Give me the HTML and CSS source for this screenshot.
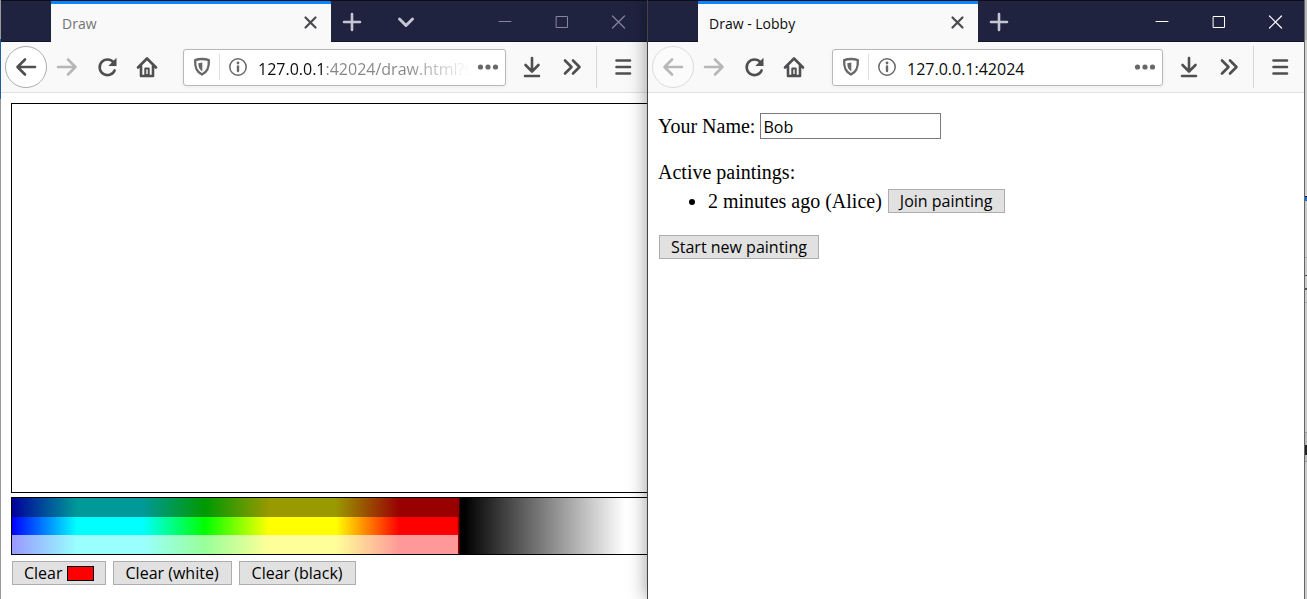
FILE: index.html
```html
<!DOCTYPE html>
<html lang="en">
<head>
<meta charset="utf-8">
<title>Draw</title>
<link rel="stylesheet" href="styles.css">
</head>
<body>
<svg class="sprite" aria-hidden="true">
  <symbol id="back" viewBox="0 0 24 24"><path d="M21 12H4M11 4.500L3.500 12l7.500 7.500"/></symbol>
  <symbol id="forward" viewBox="0 0 24 24"><path d="M3 12h17M13 4.500l7.500 7.500-7.500 7.500"/></symbol>
  <symbol id="reload" viewBox="0 0 24 24"><path d="M19.600 15.400A7.800 7.800 0 1 1 18.400 7.200"/><path d="M21.500 2.800v8.200h-8.200z" fill="currentColor" stroke="none"/></symbol>
  <symbol id="home" viewBox="0 0 24 24"><path d="M3 12.500L12 3.500l9 9M6 11v10h12V11"/><path d="M10.300 20v-6.500h3.400V20z" stroke-width="2"/></symbol>
  <symbol id="shield" viewBox="0 0 20 20"><path d="M10 2C7.500 2 5 2.500 3.200 3.200 2.800 10 4 14.500 10 17.500c6-3 7.200-7.500 6.800-14.300C15 2.500 12.500 2 10 2z"/><path d="M10.300 5.500v9C7.200 12.500 6.300 9.500 6.300 6.200z" fill="currentColor" stroke="none"/></symbol>
  <symbol id="info" viewBox="0 0 20 20"><circle cx="10" cy="10" r="8.200" stroke-width="1.500"/><path d="M10 9.500v4.500" stroke-width="2.400"/><circle cx="10" cy="6" r="1.400" fill="currentColor" stroke="none"/></symbol>
  <symbol id="dots" viewBox="0 0 24 24"><g fill="currentColor" stroke="none"><circle cx="4.500" cy="12" r="2.600"/><circle cx="12" cy="12" r="2.600"/><circle cx="19.500" cy="12" r="2.600"/></g></symbol>
  <symbol id="download" viewBox="0 0 24 24"><path d="M12 3v13M5.500 10l6.500 6.500 6.500-6.500M5 21h14"/></symbol>
  <symbol id="more" viewBox="0 0 24 24"><path d="M5 5.500l6.500 6.500L5 18.500M13 5.500l6.500 6.500-6.500 6.500"/></symbol>
  <symbol id="menu" viewBox="0 0 24 24"><path d="M6.500 5.500H20M6.500 12H20M6.500 18.500H20"/></symbol>
  <symbol id="plus" viewBox="0 0 24 24"><path d="M12 4v16M4 12h16"/></symbol>
  <symbol id="chevron" viewBox="0 0 24 24"><path d="M5.500 9l6.500 6.500L18.500 9" stroke-width="3"/></symbol>
  <symbol id="close" viewBox="0 0 24 24"><path d="M6.500 6.500l10 10M16.500 6.500l-10 10" stroke-width="2.200"/></symbol>
  <symbol id="win-min" viewBox="0 0 24 24"><path d="M6 11.500h12" stroke-width="1"/></symbol>
  <symbol id="win-max" viewBox="0 0 24 24"><path d="M6.500 6.500h11v11h-11z" stroke-width="1" stroke-linejoin="miter"/></symbol>
  <symbol id="win-close" viewBox="0 0 24 24"><path d="M5.500 6l12 12M17.500 6l-12 12" stroke-width="1.200"/></symbol>
</svg>
<div class="desktop">
  <section class="window window-back">
    <header class="tabbar">
      <div class="tab"><span class="tab-title">Draw</span><button class="tab-close" aria-label="Close tab"><svg><use href="#close"/></svg></button></div>
      <button class="tab-action" aria-label="New tab"><svg><use href="#plus"/></svg></button>
      <button class="tab-action tab-list" aria-label="List all tabs"><svg><use href="#chevron"/></svg></button>
      <div class="controls">
        <button aria-label="Minimize"><svg><use href="#win-min"/></svg></button>
        <button aria-label="Maximize"><svg><use href="#win-max"/></svg></button>
        <button aria-label="Close"><svg><use href="#win-close"/></svg></button>
      </div>
    </header>
    <nav class="toolbar">
      <button class="tool tool-back" aria-label="Back"><svg><use href="#back"/></svg></button>
      <button class="tool faded" aria-label="Forward"><svg><use href="#forward"/></svg></button>
      <button class="tool" aria-label="Reload"><svg><use href="#reload"/></svg></button>
      <button class="tool" aria-label="Home"><svg><use href="#home"/></svg></button>
      <div class="urlbar">
        <button class="shield" aria-label="Tracking protection"><svg><use href="#shield"/></svg></button>
        <button class="info" aria-label="Site information"><svg><use href="#info"/></svg></button>
        <input class="url url-long" type="text" aria-label="Address" value="127.0.0.1:42024/draw.html?s">
        <button class="dots" aria-label="Page actions"><svg><use href="#dots"/></svg></button>
      </div>
      <button class="tool" aria-label="Downloads"><svg><use href="#download"/></svg></button>
      <button class="tool" aria-label="More tools"><svg><use href="#more"/></svg></button>
      <span class="divider"></span>
      <button class="tool" aria-label="Menu"><svg><use href="#menu"/></svg></button>
    </nav>
    <main class="page page-draw">
      <div class="canvas" role="img" aria-label="Painting"></div>
      <div class="palette" role="img" aria-label="Colour palette"></div>
      <div class="actions">
        <button class="btn">Clear <span class="swatch"></span></button>
        <button class="btn">Clear (white)</button>
        <button class="btn">Clear (black)</button>
      </div>
    </main>
  </section>
  <section class="window window-front">
    <header class="tabbar">
      <div class="tab"><span class="tab-title">Draw - Lobby</span><button class="tab-close" aria-label="Close tab"><svg><use href="#close"/></svg></button></div>
      <button class="tab-action" aria-label="New tab"><svg><use href="#plus"/></svg></button>
      <div class="controls">
        <button aria-label="Minimize"><svg><use href="#win-min"/></svg></button>
        <button aria-label="Maximize"><svg><use href="#win-max"/></svg></button>
        <button aria-label="Close"><svg><use href="#win-close"/></svg></button>
      </div>
    </header>
    <nav class="toolbar">
      <button class="tool tool-back faded" aria-label="Back"><svg><use href="#back"/></svg></button>
      <button class="tool faded" aria-label="Forward"><svg><use href="#forward"/></svg></button>
      <button class="tool" aria-label="Reload"><svg><use href="#reload"/></svg></button>
      <button class="tool" aria-label="Home"><svg><use href="#home"/></svg></button>
      <div class="urlbar">
        <button class="shield" aria-label="Tracking protection"><svg><use href="#shield"/></svg></button>
        <button class="info" aria-label="Site information"><svg><use href="#info"/></svg></button>
        <input class="url" type="text" aria-label="Address" value="127.0.0.1:42024">
        <button class="dots" aria-label="Page actions"><svg><use href="#dots"/></svg></button>
      </div>
      <button class="tool" aria-label="Downloads"><svg><use href="#download"/></svg></button>
      <button class="tool" aria-label="More tools"><svg><use href="#more"/></svg></button>
      <span class="divider"></span>
      <button class="tool" aria-label="Menu"><svg><use href="#menu"/></svg></button>
    </nav>
    <main class="page page-lobby">
      <div class="name-row"><label for="name">Your Name:</label><input id="name" class="name" type="text" value="Bob"></div>
      <div class="list-title">Active paintings:</div>
      <ul class="paintings">
        <li><div class="painting"><span>2 minutes ago (Alice)</span><button class="btn">Join painting</button></div></li>
      </ul>
      <button class="btn">Start new painting</button>
    </main>
  </section>
  <div class="behind"></div>
</div>
</body>
</html>
```

FILE: styles.css
```css
* { box-sizing: border-box; }
body { margin: 0; font-family: "Open Sans", sans-serif; color: #000; }
button { font: inherit; margin: 0; padding: 0; border: 0; background: none; color: inherit; }
svg { width: 24px; height: 24px; display: block; fill: none; stroke: currentColor; stroke-width: 2.6; stroke-linecap: round; stroke-linejoin: round; }
.sprite { position: absolute; width: 0; height: 0; }

.desktop { display: grid; grid-template-columns: 647fr 657fr 3px; height: 100vh; overflow: hidden; }
.window { display: flex; flex-direction: column; min-width: 0; background: #fff; }
.window-back { border-left: 1px solid; border-image: linear-gradient(#999 40px, #1f5f99 40px, #1f5f99 100px, #999 100px) 1; }
.window-front { border-left: 1px solid #444; box-shadow: 0 0 18px rgba(0, 0, 0, 0.4); position: relative; }

.tabbar { display: flex; align-items: center; height: 42px; background: linear-gradient(#202340 40px, #14162b 40px); border-top: 1px solid #0c0d1c; padding-left: 50px; color: #c5c6d3; }
.tab { display: flex; align-items: center; justify-content: space-between; width: 280px; height: 41px; flex: none; padding: 0 8px 0 11px; background: #f9f9fa; border-top: 3px solid #0a84ff; color: #0c0c0d; font-size: 14px; }
.window-back .tab-title { color: #737373; }
.tab-close { color: #4a4a4f; }
.tab-action { display: flex; justify-content: center; width: 42px; }
.tab-list { margin-left: 12px; }
.controls { display: flex; margin-left: auto; color: #fff; }
.controls button { display: flex; justify-content: center; width: 57px; }
.window-back .controls { color: #85869a; }

.toolbar { display: flex; align-items: center; height: 51px; padding: 0 5px 0 4px; background: #f9f9fa; border-bottom: 1px solid #e0e0e1; color: #4f4f51; }
.tool { display: flex; align-items: center; justify-content: center; width: 40px; height: 42px; flex: none; }
.tool-back { width: 42px; border: 1px solid #adadae; border-radius: 50%; background: #fff; }
.tool.faded { color: #b7b7b8; }
.tool-back.faded { border-color: #dcdcdd; background: #fbfbfb; }
.divider { width: 1px; height: 42px; margin: 0 5px 0 4px; background: #d7d7db; }
.urlbar { display: flex; align-items: center; flex: 1; min-width: 0; height: 37px; margin: 0 6px 0 16px; border: 1px solid #b8b8b9; border-radius: 3px; background: #fff; box-shadow: 0 1px 4px rgba(0, 0, 0, 0.06); color: #68686a; }
.window-front .urlbar { margin-left: 18px; }
.urlbar svg { width: 20px; height: 20px; stroke-width: 2.4; }
.urlbar .dots svg { width: 24px; height: 24px; }
.shield { display: flex; align-items: center; justify-content: center; width: 36px; height: 26px; border-right: 1px solid #dededf; }
.info { display: flex; justify-content: center; width: 36px; }
.dots { display: flex; justify-content: center; width: 34px; }
.url { flex: 1; min-width: 0; width: 0; height: 34px; padding: 4px 0 0 2px; border: 0; background: none; font: 16px/24px "Open Sans", sans-serif; color: #0c0c0d; outline: 0; }
.url-long { color: transparent; background: linear-gradient(90deg, #0c0c0d 66px, #858586 66px, #858586 150px, #85858600 214px); -webkit-background-clip: text; background-clip: text; }

.page { flex: 1; min-height: 0; background: #fff; }
.btn { height: 24px; padding: 1px 11px 0; border: 1px solid #adadad; background: #e1e1e1; color: #000; font: 16px/21px "Open Sans", sans-serif; white-space: nowrap; }
.page-draw { display: flex; flex-direction: column; padding: 10px 0 14px 10px; }
.canvas { flex: 1; border: 1px solid #000; border-right: 0; }
.palette {
  height: 58px; margin: 4px 0 6px; border: 1px solid #000; border-right: 0;
  background:
    linear-gradient(rgba(0, 0, 0, 0.4), rgba(0, 0, 0, 0.4)) left top / 70.3% 19px no-repeat,
    linear-gradient(rgba(255, 255, 255, 0.6), rgba(255, 255, 255, 0.6)) left bottom / 70.3% 19px no-repeat,
    linear-gradient(90deg, #00f, #0ff 10.2%, #0ff 20.5%, #0f0 30.4%, #ff0 40.5%, #ff0 51%, #f00 61%, #f00 70.1%, #000 70.6%, #000 71.2%, #fff 96.5%);
}
.actions { display: flex; gap: 7px; padding-left: 1px; }
.actions .btn { display: flex; align-items: center; gap: 4px; }
.actions .btn + .btn { padding: 1px 12px 0; }
.swatch { width: 27px; height: 15px; margin-bottom: 1px; border: 1px solid #000; background: #f00; }

.page-lobby { padding: 20px 10px; font: 20px/24px "Liberation Serif", serif; }
.name-row { display: flex; align-items: center; gap: 5px; height: 26px; }
.name { width: 181px; height: 26px; padding: 2px 2px 0; border: 1px solid #7a7a7a; font: 16px/22px "Open Sans", sans-serif; }
.list-title { margin-top: 21px; }
.paintings { margin: 5px 0 22px; padding-left: 50px; }
.painting { display: flex; gap: 6px; }
.page-lobby > .btn { display: block; margin-left: 1px; }

.behind {
  position: relative; border-left: 1px solid #666;
  background: linear-gradient(#b8b8b8 40px, #d0d0d0 40px, #d0d0d0 196px, #111 196px, #111 197px, #1673d0 197px, #1673d0 201px, #ccc 201px, #ccc 257px, #aaa 257px, #aaa 258px, #ccc 258px, #ccc 275px, #555 275px, #555 276px, #ccc 276px, #ccc 288px, #555 288px, #555 290px, #ccc 290px, #ccc 302px, #aaa 302px, #aaa 303px, #ccc 303px, #ccc 432px, #999 432px, #999 433px, #bbb 433px, #bbb 445px, #222 445px, #222 455px, #bbb 455px, #bbb 461px, #999 461px, #999 462px, #ccc 462px);
}
```
